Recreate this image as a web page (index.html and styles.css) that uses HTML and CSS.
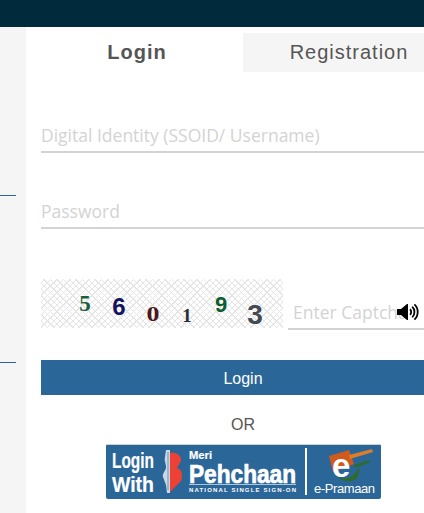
FILE: index.html
```html
<!DOCTYPE html>
<html lang="en">
<head>
  <meta charset="UTF-8" />
  <meta name="viewport" content="width=device-width, initial-scale=1.0"/>
  <title>Login</title>
  <link rel="stylesheet" href="styles.css">
</head>
<body>
  <div class="topbar"></div>
  <div class="page">
    <div class="side">
      <div class="side-line first"></div>
      <div class="side-line second"></div>
    </div>
    <div class="main">
      <div class="tabs">
        <div class="tab active">Login</div>
        <div class="tab">Registration</div>
      </div>

      <form class="login-form">
        <input class="field user" type="text" placeholder="Digital Identity (SSOID/ Username)">
        <input class="field pass" type="password" placeholder="Password">

        <div class="captcha-row">
          <div class="captcha">
            <span class="digit d1">5</span>
            <span class="digit d2">6</span>
            <span class="digit d3">0</span>
            <span class="digit d4">1</span>
            <span class="digit d5">9</span>
            <span class="digit d6">3</span>
          </div>
          <div class="captcha-input">
            <input class="field" type="text" placeholder="Enter Captcha">
            <svg class="speaker" viewBox="0 0 22 18" width="22" height="18">
              <path d="M0 6h4l6-5h1v16h-1l-6-5H0z" fill="#000"/>
              <path d="M13 6.2c1.6 1.4 1.6 4.2 0 5.6" fill="none" stroke="#000" stroke-width="1.8"/>
              <path d="M15.2 3.8c3 2.6 3 7.8 0 10.4" fill="none" stroke="#000" stroke-width="1.8"/>
              <path d="M17.4 1.4c4.4 3.8 4.4 11.4 0 15.2" fill="none" stroke="#000" stroke-width="1.8"/>
            </svg>
          </div>
        </div>

        <button type="button" class="login-btn">Login</button>
        <div class="or">OR</div>

        <div class="pehchaan">
          <svg viewBox="0 0 275 55" width="275" height="55">
            <rect x="0" y="0" width="275" height="55" rx="2" fill="#2b6699"/>
            <rect x="0" y="0" width="275" height="1" fill="#c9d3db"/>
            <g fill="#fff" stroke="#fff" font-family="'Liberation Sans', Arial, sans-serif" font-weight="bold">
              <text x="6" y="24" font-size="22" stroke-width="0.2" textLength="42" lengthAdjust="spacingAndGlyphs">Login</text>
              <text x="6" y="48" font-size="22" stroke-width="0.2" textLength="42" lengthAdjust="spacingAndGlyphs">With</text>
              <text x="83" y="15" font-size="11" stroke-width="0.2" textLength="23" lengthAdjust="spacingAndGlyphs">Meri</text>
              <text x="83" y="39" font-size="25" stroke-width="0.7" textLength="107" lengthAdjust="spacingAndGlyphs">Pehchaan</text>
              <text x="83" y="48" font-size="6" stroke-width="0" textLength="107">NATIONAL SINGLE SIGN-ON</text>
            </g>
            <rect x="83" y="40" width="107" height="1" fill="#a9c3d8"/>
            <path d="M60 6h4v43h-3l-1-8-3-8c-1-4 3-6 3-10s-2-6-1-10z" fill="#c9d8e4"/>
            <rect x="61.5" y="8" width="1" height="38" fill="#6d93b5"/>
            <path d="M64 9c5-1 10 1 11 6 0 4-3 6-4 9 3 1 5 3 5 7 0 4-1 7-3 8l-9 9z" fill="#ee4136"/>
            <rect x="199" y="4" width="2" height="47" fill="#fff"/>
            <path d="M223 12l20-6 5 14-21 8z" fill="#cf5a1e"/>
            <path d="M243 11l23-6 1 3-23 7z" fill="#dd7d2a"/>
            <path d="M231 31c5 5 13 5 19-3l4-5-2 10c-3 3-7 5-12 4-5-1-8-3-9-6z" fill="#2f6b2a"/>
            <path d="M248 21l15-5 1 2-15 6z" fill="#2f6b2a"/>
            <text x="226" y="33" font-family="'Liberation Sans', Arial, sans-serif" font-weight="bold" font-size="33" fill="#fff">e</text>
            <text x="208" y="49" font-family="'Liberation Sans', Arial, sans-serif" font-size="13" fill="#fff" textLength="61">e-Pramaan</text>
          </svg>
        </div>
      </form>
    </div>
  </div>
</body>
</html>
```

FILE: styles.css
```css
html, body {
  height: 100%;
}

body {
  margin: 0;
  font-family: "Liberation Sans", Arial, sans-serif;
  background-color: #fff;
  overflow: hidden;
}

.topbar {
  height: 27px;
  background-color: #012b3d;
}

.page {
  display: flex;
  height: 486px;
}

.side {
  width: 26px;
  flex-shrink: 0;
  background-color: #f5f5f5;
}

.side-line {
  width: 16px;
  height: 1px;
  background-color: #2b6699;
}

.side-line.first {
  margin-top: 168px;
}

.side-line.second {
  margin-top: 166px;
}

.main {
  flex: 1;
  min-width: 0;
  padding-top: 6px;
  overflow: hidden;
}

.tabs {
  display: flex;
  width: 429px;
  height: 39px;
}

.tab {
  display: flex;
  align-items: center;
  justify-content: center;
  font-size: 20px;
  letter-spacing: 1px;
  color: #555;
  background-color: #f5f5f5;
  width: 212px;
}

.tab.active {
  width: 217px;
  box-sizing: border-box;
  padding-left: 5px;
  font-weight: bold;
  background-color: #fff;
}

.login-form {
  padding-left: 15px;
  width: 419px;
  box-sizing: border-box;
}

.field {
  display: block;
  width: 100%;
  box-sizing: border-box;
  border: none;
  border-bottom: 2px solid #d3d3d3;
  outline: none;
  padding: 2px 0 0;
  height: 36px;
  font-family: "Open Sans", sans-serif;
  font-size: 17.5px;
  background: transparent;
}

.field::placeholder {
  color: #d3d3d3;
  opacity: 1;
}

.field.user {
  margin-top: 45px;
}

.field.pass {
  margin-top: 40px;
}

.captcha-row {
  display: flex;
  margin-top: 50px;
}

.captcha {
  display: flex;
  width: 242px;
  height: 49px;
  flex-shrink: 0;
  box-sizing: border-box;
  padding-left: 27px;
  background-color: #fff;
  background-image:
    repeating-linear-gradient(45deg, #e6e6e6 0, #e6e6e6 1px, transparent 1px, transparent 4.5px),
    repeating-linear-gradient(-45deg, #e6e6e6 0, #e6e6e6 1px, transparent 1px, transparent 4.5px);
}

.digit {
  width: 34px;
  text-align: center;
  font-family: "Liberation Serif", serif;
  font-weight: bold;
  line-height: 1;
}

.d1 { margin-top: 13px; font-size: 23px; color: #1a5e3a; }
.d2 {
  margin-top: 16px;
  font-size: 24px;
  font-family: "Liberation Sans", sans-serif;
  color: #14145e;
}
.d3 { margin-top: 25px; font-size: 20px; color: #4f1620; transform: scaleX(1.3); }
.d4 { margin-top: 27px; font-size: 19px; color: #2c2c3c; }
.d5 {
  margin-top: 15px;
  font-size: 22px;
  font-family: "Liberation Sans", sans-serif;
  color: #0c5c30;
}
.d6 {
  margin-top: 22px;
  font-size: 28px;
  font-family: "Liberation Sans", sans-serif;
  color: #434a52;
}

.captcha-input {
  position: relative;
  flex: 1;
  margin-left: 5px;
  height: 51px;
  overflow: hidden;
}

.captcha-input .field {
  margin-top: 15px;
  padding-left: 5px;
}

.speaker {
  position: absolute;
  left: 109px;
  top: 24px;
}

.login-btn {
  display: block;
  width: 100%;
  height: 35px;
  margin-top: 30px;
  padding: 2px 0 0;
  border: none;
  background-color: #2b6699;
  color: #fff;
  font-family: "Liberation Sans", Arial, sans-serif;
  font-size: 16px;
  cursor: pointer;
}

.or {
  margin-top: 21px;
  text-align: center;
  font-size: 16px;
  line-height: 18px;
  color: #555;
}

.pehchaan {
  width: 275px;
  height: 55px;
  margin: 10px auto 0;
}

.pehchaan svg {
  display: block;
}
```
